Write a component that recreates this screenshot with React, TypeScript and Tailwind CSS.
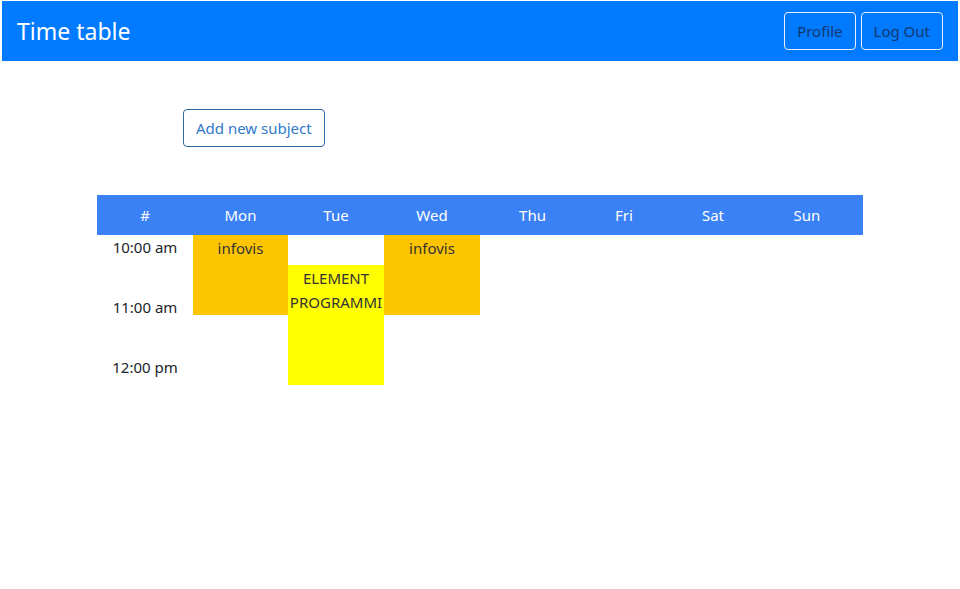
import React from "react";

type Slot = {
  title: string[];
  col: string;
  rows: string;
  color: string;
};

const days = ["#", "Mon", "Tue", "Wed", "Thu", "Fri", "Sat", "Sun"];

const times = [
  { label: "10:00 am", rows: "row-start-1 row-span-6" },
  { label: "11:00 am", rows: "row-start-7 row-span-6" },
  { label: "12:00 pm", rows: "row-start-13 row-span-6" },
];

const slots: Slot[] = [
  { title: ["infovis"], col: "col-start-2", rows: "row-start-1 row-span-8", color: "bg-[#fcc500]" },
  { title: ["ELEMENT", "PROGRAMMI"], col: "col-start-3", rows: "row-start-4 row-span-12", color: "bg-[#ffff00]" },
  { title: ["infovis"], col: "col-start-4", rows: "row-start-1 row-span-8", color: "bg-[#fcc500]" },
];

// column widths follow the auto table layout of the original page
const cols = "grid-cols-[96px_95px_96px_96px_105px_78px_100px_88px_12px]";

const App: React.FC = () => {
  return (
    <div className="min-h-[589px] bg-white pt-px font-['Noto_Sans',sans-serif] text-[#212529]">
      {/* navbar */}
      <nav className="mx-[2px] flex h-[60px] items-center justify-between bg-[#007bff] px-[15px]">
        <span className="text-[23px] text-white">Time table</span>
        <div className="flex gap-[5px]">
          <button className="h-[38px] rounded border border-[#e8f0fb] px-[12px] text-[15px] text-[#16386e]">
            Profile
          </button>
          <button className="h-[38px] rounded border border-[#e8f0fb] px-[12px] text-[15px] text-[#16386e]">
            Log Out
          </button>
        </div>
      </nav>

      <div className="pl-[183px] pt-[48px]">
        <button className="h-[38px] rounded border border-[#2c6aa6] px-[12px] text-[15px] text-[#3179c9]">
          Add new subject
        </button>
      </div>

      <div className="ml-[97px] mt-[48px] w-[766px]">
        <div className={`grid h-[40px] ${cols} items-center bg-[#3b81f6] text-[15px] text-white`}>
          {days.map((d) => (
            <div key={d} className="text-center">
              {d}
            </div>
          ))}
        </div>
        <div className={`grid ${cols} grid-rows-[repeat(18,10px)]`}>
          {times.map((t) => (
            <div key={t.label} className={`col-start-1 ${t.rows} pt-[1px] text-center text-[15px]`}>
              {t.label}
            </div>
          ))}
          {slots.map((s, i) => (
            <div
              key={i}
              className={`${s.col} ${s.rows} ${s.color} overflow-hidden pt-[1px] text-center text-[15px] leading-[24px] text-[#333]`}
            >
              {s.title.map((line) => (
                <div key={line} className="whitespace-nowrap">
                  {line}
                </div>
              ))}
            </div>
          ))}
        </div>
      </div>
    </div>
  );
};

export default App;
